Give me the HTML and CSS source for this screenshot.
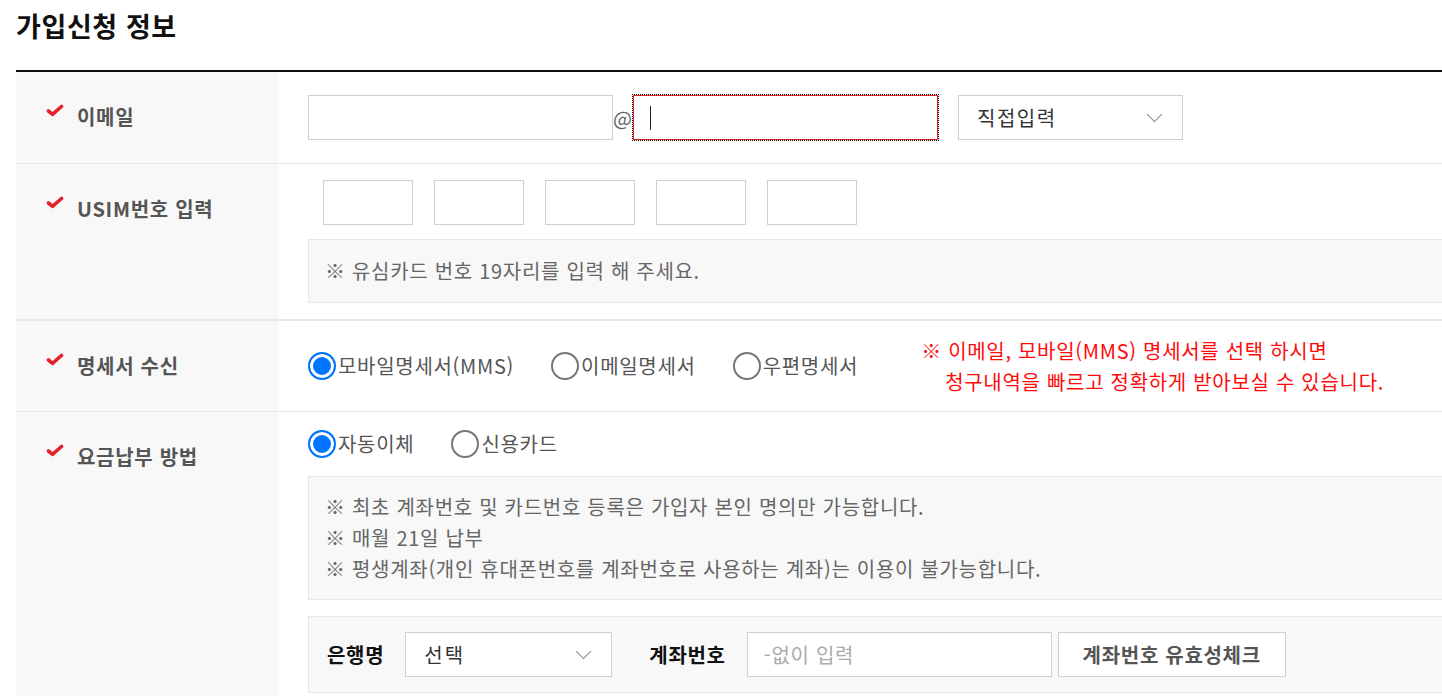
FILE: index.html
```html
<!DOCTYPE html>
<html lang="ko">
<head>
<meta charset="UTF-8" />
<meta name="viewport" content="width=device-width, initial-scale=1" />
<title>가입신청 정보</title>
<link rel="stylesheet" href="styles.css">
</head>
<body>

<div class="apply">
  <h2 class="apply-title">가입신청 정보</h2>

  <div class="form-table">
    <!-- 이메일 -->
    <div class="form-row">
      <div class="form-label"><span class="req"></span>이메일</div>
      <div class="form-field email-field">
        <input type="text" class="txt email-id" />
        <span class="at">@</span>
        <div class="txt email-domain is-focus"><span class="caret"></span></div>
        <div class="select email-select">직접입력<span class="chev"></span></div>
      </div>
    </div>

    <!-- USIM -->
    <div class="form-row row-usim">
      <div class="form-label"><span class="req"></span>USIM번호 입력</div>
      <div class="form-field usim-field">
        <div class="usim-boxes">
          <input type="text" class="txt usim" maxlength="4" />
          <input type="text" class="txt usim" maxlength="4" />
          <input type="text" class="txt usim" maxlength="4" />
          <input type="text" class="txt usim" maxlength="4" />
          <input type="text" class="txt usim" maxlength="3" />
        </div>
        <div class="info-box">※ 유심카드 번호 19자리를 입력 해 주세요.</div>
      </div>
    </div>

    <!-- 명세서 -->
    <div class="form-row">
      <div class="form-label"><span class="req"></span>명세서 수신</div>
      <div class="form-field bill-field">
        <div class="radios">
          <label class="radio"><input type="radio" name="bill" checked />모바일명세서(MMS)</label>
          <label class="radio"><input type="radio" name="bill" />이메일명세서</label>
          <label class="radio"><input type="radio" name="bill" />우편명세서</label>
        </div>
        <p class="bill-note">※ 이메일, 모바일(MMS) 명세서를 선택 하시면<br>청구내역을 빠르고 정확하게 받아보실 수 있습니다.</p>
      </div>
    </div>

    <!-- 요금납부 -->
    <div class="form-row">
      <div class="form-label"><span class="req"></span>요금납부 방법</div>
      <div class="form-field pay-field">
        <div class="radios">
          <label class="radio"><input type="radio" name="pay" checked />자동이체</label>
          <label class="radio"><input type="radio" name="pay" />신용카드</label>
        </div>
        <div class="info-box info-lines">
          <p>※ 최초 계좌번호 및 카드번호 등록은 가입자 본인 명의만 가능합니다.</p>
          <p>※ 매월 21일 납부</p>
          <p>※ 평생계좌(개인 휴대폰번호를 계좌번호로 사용하는 계좌)는 이용이 불가능합니다.</p>
        </div>
        <div class="bank-box">
          <strong class="bank-label">은행명</strong>
          <div class="select bank-select">선택<span class="chev"></span></div>
          <strong class="bank-label account-label">계좌번호</strong>
          <input type="text" class="txt account" placeholder="-없이 입력" />
          <button class="btn-check">계좌번호 유효성체크</button>
        </div>
      </div>
    </div>
  </div>
</div>

</body>
</html>
```

FILE: styles.css
```css
html, body {
  overflow: hidden;
}

body {
  margin: 0;
  font-family: 'Noto Sans CJK KR', 'Noto Sans', sans-serif;
  font-size: 20px;
  letter-spacing: 0.7px;
  color: #333;
  background: #fff;
}

.apply {
  width: 1500px;
  padding-left: 16px;
}

.apply-title {
  margin: 0;
  height: 70px;
  padding-top: 8px;
  box-sizing: border-box;
  font-size: 27px;
  letter-spacing: 0.6px;
  line-height: 36px;
  font-weight: 700;
  color: #111;
}

.form-table {
  border-top: 2px solid #111;
}

.form-row {
  display: flex;
  border-bottom: 1px solid #e8e8e8;
}

.row-usim {
  border-bottom-width: 2px;
}

.form-label {
  flex: 0 0 262px;
  box-sizing: border-box;
  padding: 31px 0 0 30px;
  background: #f8f8f8;
  font-weight: 700;
  line-height: 28px;
  color: #555;
  display: flex;
  align-items: flex-start;
}

/* red check mark */
.req {
  width: 18px;
  height: 13px;
  margin: 1px 13px 0 0;
  background: url("data:image/svg+xml;utf8,<svg xmlns='http://www.w3.org/2000/svg' viewBox='0 0 18 13'><path d='M2.5 7 L6.5 10.3 L15.5 2.5' fill='none' stroke='%23e4222b' stroke-width='3.6' stroke-linecap='round' stroke-linejoin='round'/></svg>") no-repeat;
}

.form-field {
  flex: 1;
  padding: 23px 30px;
}

.txt {
  box-sizing: border-box;
  height: 45px;
  border: 1px solid #d0d0d0;
  background: #fff;
  font-family: inherit;
  font-size: 20px;
  letter-spacing: 0.7px;
  padding: 0 16px;
  outline: none;
}

.email-field {
  display: flex;
  align-items: center;
}

.email-id,
.email-domain {
  width: 305px;
}

.at {
  width: 20px;
  color: #666;
  letter-spacing: 0;
}

.email-domain.is-focus {
  border-color: #e02020;
  outline: 1px dotted #000;
  display: flex;
  align-items: center;
}

.caret {
  width: 1px;
  height: 24px;
  background: #222;
}

.select {
  box-sizing: border-box;
  height: 45px;
  border: 1px solid #d0d0d0;
  background: #fff;
  display: flex;
  align-items: center;
  justify-content: space-between;
  padding: 0 18px;
  color: #333;
  letter-spacing: 1.5px;
}

.chev {
  width: 10px;
  height: 10px;
  border-right: 1.5px solid #888;
  border-bottom: 1.5px solid #888;
  transform: rotate(45deg);
  margin: -6px 4px 0 0;
}

.email-select {
  width: 225px;
  margin-left: 20px;
}

.usim-field {
  padding: 16px 30px;
}

.usim-boxes {
  display: flex;
  gap: 21px;
  padding-left: 15px;
}

.usim {
  width: 90px;
}

.info-box {
  margin-top: 14px;
  border: 1px solid #e6e6e6;
  background: #f8f8f8;
  padding: 17px 16px;
  line-height: 28px;
  color: #666;
}

.bill-field {
  display: flex;
  align-items: center;
  padding: 14px 30px;
}

.radios {
  display: flex;
  align-items: center;
  gap: 37px;
}

.radio {
  display: flex;
  align-items: center;
  color: #555;
  line-height: 32px;
}

.radio input {
  appearance: none;
  -webkit-appearance: none;
  width: 28px;
  height: 28px;
  margin: 0 2px 0 0;
  border: 2px solid #767676;
  border-radius: 50%;
  box-sizing: border-box;
  background: #fff;
}

.radio input:checked {
  border-color: #0075ff;
  box-shadow: inset 0 0 0 3px #fff;
  background: #0075ff;
}

.bill-note {
  margin: 0 0 0 63px;
  color: #ff0a0a;
  line-height: 31px;
  text-indent: -24px;
  padding-left: 24px;
}

.pay-field {
  padding: 16px 30px;
}

.info-lines {
  margin-top: 16px;
  padding: 14px 16px 15px;
  line-height: 31px;
}

.info-lines p {
  margin: 0;
}

.bank-box {
  margin-top: 16px;
  border: 1px solid #e6e6e6;
  background: #f8f8f8;
  padding: 15px 18px;
  display: flex;
  align-items: center;
}

.bank-label {
  color: #111;
  font-weight: 700;
}

.bank-select {
  width: 207px;
  height: 45px;
  margin-left: 21px;
  letter-spacing: 2px;
}

.account-label {
  margin-left: 37px;
}

.account {
  width: 305px;
  margin-left: 21px;
}

.account::placeholder {
  color: #aaa;
}

.btn-check {
  height: 45px;
  width: 228px;
  margin-left: 6px;
  border: 1px solid #d0d0d0;
  background: #fff;
  font-family: inherit;
  font-size: 20px;
  letter-spacing: 0.7px;
  font-weight: 700;
  color: #555;
  cursor: pointer;
}
```
